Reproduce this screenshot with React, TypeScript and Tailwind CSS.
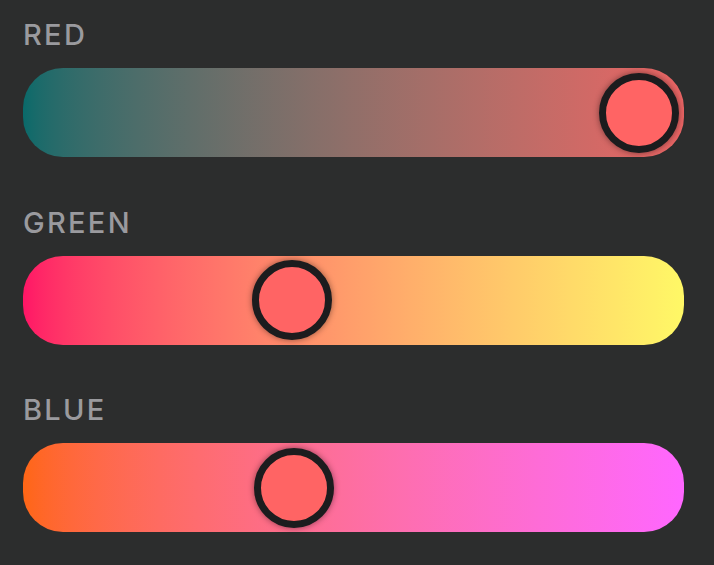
import React from 'react';

type Channel = {
  label: string;
  value: number;
  track: string;
};

const channels: Channel[] = [
  { label: 'RED', value: 255, track: 'bg-gradient-to-r from-[#086a6a] to-[#ea6464]' },
  { label: 'GREEN', value: 100, track: 'bg-gradient-to-r from-[#ff1466] to-[#fff866]' },
  { label: 'BLUE', value: 101, track: 'bg-gradient-to-r from-[#ff6614] to-[#ff66ff]' },
];

// track is 661px wide, thumb 80px, 5px inset on each side
const TRAVEL = 661 - 80 - 10;

function Slider({ label, value, track }: Channel) {
  const left = 5 + (value / 255) * TRAVEL;
  return (
    <div className="flex flex-col">
      <span className="h-[34px] text-[29px] leading-[34px] font-medium tracking-[2.3px] text-[#9a9a9e]">
        {label}
      </span>
      <div className={`relative mt-[16px] h-[89px] w-[661px] rounded-[40px] ${track}`}>
        <div
          className="absolute top-1/2 h-[80px] w-[80px] -translate-y-1/2 rounded-full border-[7px] border-[#1c1c1e] bg-[#ff6464] shadow-[0_0_6px_rgba(0,0,0,0.45)]"
          style={{ left }}
        />
      </div>
    </div>
  );
}

function App() {
  return (
    <div
      className="h-[565px] w-[714px] bg-[#2c2d2d] pl-[23px] pt-[18px]"
      style={{ fontFamily: 'Inter, "Noto Sans", sans-serif' }}
    >
      <div className="flex flex-col gap-[48.5px]">
        {channels.map((c) => (
          <Slider key={c.label} {...c} />
        ))}
      </div>
    </div>
  );
}

export default App;
